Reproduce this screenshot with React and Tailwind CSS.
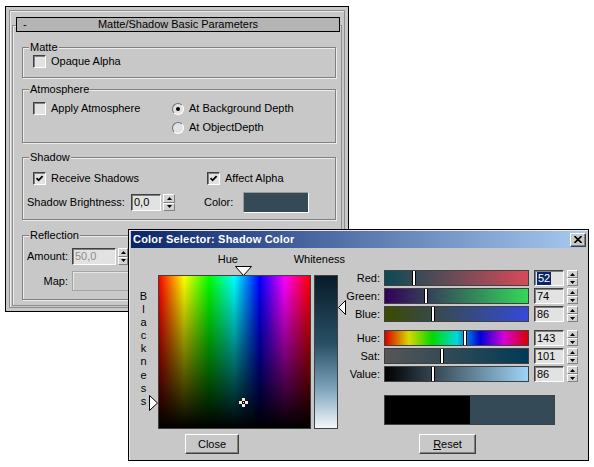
import React from "react";

const FONT = "font-['Liberation_Sans',Arial,sans-serif]";
const RAISED =
  "border border-t-white border-l-white border-b-[#404040] border-r-[#404040] bg-[#c8c8c8] shadow-[inset_-1px_-1px_0_#808080]";
const SUNKEN =
  "border border-t-[#404040] border-l-[#404040] border-b-white border-r-white bg-[#e2e2e2] shadow-[inset_1px_1px_0_#808080]";

const CheckBox = ({ checked }) => (
  <span className={`flex h-[13px] w-[13px] shrink-0 items-center justify-center ${SUNKEN}`}>
    {checked && (
      <svg width="9" height="9" viewBox="0 0 9 9">
        <path d="M1.5 4.2 L3.6 6.3 L7.6 2.2" fill="none" stroke="#000" strokeWidth="1.8" />
      </svg>
    )}
  </span>
);

const Radio = ({ on }) => (
  <span className="flex h-[12px] w-[12px] shrink-0 items-center justify-center rounded-full border border-t-[#707070] border-l-[#707070] border-b-white border-r-white bg-[#e2e2e2]">
    {on && <span className="h-[4px] w-[4px] rounded-full bg-black" />}
  </span>
);

const Spin = ({ className }) => (
  <div className={`flex shrink-0 flex-col ${className}`}>
    {["M2.5 0L5 3H0Z", "M0 0H5L2.5 3Z"].map((d) => (
      <div key={d} className="flex flex-1 items-center justify-center border border-t-white border-l-white border-b-[#808080] border-r-[#808080] bg-[#d2d2d2]">
        <svg width="5" height="3" viewBox="0 0 5 3">
          <path d={d} fill="#000" />
        </svg>
      </div>
    ))}
  </div>
);

const Field = ({ className, children }) => (
  <div className={`flex shrink-0 items-center pl-[2px] ${SUNKEN} ${className}`}>{children}</div>
);

const Group = ({ label, className, children }) => (
  <div className={`ml-[9px] w-[314px] border border-[#808080] shadow-[1px_1px_0_#ececec,inset_1px_1px_0_#ececec] ${className}`}>
    <div className="-mt-[7px] ml-[6px] h-[13px] w-fit bg-[#c8c8c8] px-[1px]">{label}</div>
    {children}
  </div>
);

const Bar = ({ value, bg }) => {
  const left = Math.round((value / 255) * 143) - 2;
  return (
    <div className={`relative ml-[4px] h-[16px] w-[145px] shrink-0 border border-[#404040] ${bg}`}>
      <div className="absolute bottom-0 top-0 w-[4px] border-x border-black bg-white" style={{ left }} />
    </div>
  );
};

const ColorRow = ({ label, value, bg, selected, className = "" }) => (
  <div className={`flex h-[16px] items-center ${className}`}>
    <span className="w-[35px] shrink-0 text-right">{label}</span>
    <Bar value={value} bg={bg} />
    <Field className="ml-[5px] h-[16px] w-[30px]">
      {selected ? <span className="bg-[#0a246a] px-[1px] text-white">{value}</span> : value}
    </Field>
    <Spin className="ml-[3px] h-[16px] w-[11px]" />
  </div>
);

const rgbRows = [
  { label: "Red:", value: 52, bg: "bg-[linear-gradient(to_right,#0a4a56,#d84a58)]", selected: true },
  { label: "Green:", value: 74, bg: "bg-[linear-gradient(to_right,#34005a,#34d85a)]", className: "mt-[2px]" },
  { label: "Blue:", value: 86, bg: "bg-[linear-gradient(to_right,#3a4a00,#344ad8)]", className: "mt-[2px]" },
];

const hsvRows = [
  {
    label: "Hue:",
    value: 143,
    bg: "bg-[linear-gradient(to_right,#d80000,#d8d800,#00d800,#00d8d8,#0000d8,#d800d8,#d80000)]",
    className: "mt-[8px]",
  },
  { label: "Sat:", value: 101, bg: "bg-[linear-gradient(to_right,#565656,#003a58)]", className: "mt-[2px]" },
  { label: "Value:", value: 86, bg: "bg-[linear-gradient(to_right,#000000,#9ed4f8)]", className: "mt-[2px]" },
];

const MatteShadowPanel = () => (
  <div className="absolute left-[5px] top-[6px] h-[306px] w-[344px] border border-black bg-[#c8c8c8]">
    <div className="m-[3px] h-[298px] border border-[#8c8c8c] shadow-[inset_1px_1px_0_#ececec]">
      <div className="ml-[2px] mt-[14px] h-[281px] w-[330px] border border-[#8c8c8c] shadow-[inset_1px_1px_0_#ececec]">
        <div className="-mt-[9px] ml-[3px] grid h-[15px] w-[324px] grid-cols-[16px_1fr_16px] items-center border border-black bg-[#b4b4b4] leading-[13px]">
          <span className="pl-[6px]">-</span>
          <span className="text-center">Matte/Shadow Basic Parameters</span>
          <span />
        </div>

        <Group label="Matte" className="mt-[15px] h-[31px]">
          <div className="mt-[1px] flex h-[13px] items-center pl-[10px]">
            <CheckBox />
            <span className="ml-[5px]">Opaque Alpha</span>
          </div>
        </Group>

        <Group label="Atmosphere" className="mt-[11px] h-[54px]">
          <div className="mt-[6px] flex pl-[10px]">
            <div className="flex h-[13px] w-[139px] items-center">
              <CheckBox />
              <span className="ml-[5px]">Apply Atmosphere</span>
            </div>
            <div className="flex flex-col gap-[6px]">
              <div className="flex h-[13px] items-center">
                <Radio on />
                <span className="ml-[5px]">At Background Depth</span>
              </div>
              <div className="flex h-[13px] items-center">
                <Radio />
                <span className="ml-[5px]">At ObjectDepth</span>
              </div>
            </div>
          </div>
        </Group>

        <Group label="Shadow" className="mt-[14px] h-[63px]">
          <div className="mt-[8px] flex h-[13px] items-center pl-[10px]">
            <div className="flex w-[174px] items-center">
              <CheckBox checked />
              <span className="ml-[5px]">Receive Shadows</span>
            </div>
            <CheckBox checked />
            <span className="ml-[5px]">Affect Alpha</span>
          </div>
          <div className="mt-[7px] flex h-[21px] items-center pl-[4px]">
            <span className="w-[104px] shrink-0">Shadow Brightness:</span>
            <Field className="h-[17px] w-[30px]">0,0</Field>
            <Spin className="ml-[2px] h-[17px] w-[12px]" />
            <span className="ml-[29px] w-[39px] shrink-0">Color:</span>
            <div className="h-[21px] w-[66px] border border-t-[#9a9a9a] border-l-[#9a9a9a] border-b-white border-r-white bg-[#344a56]" />
          </div>
        </Group>

        <Group label="Reflection" className="mt-[15px] h-[65px]">
          <div className="mt-[6px] flex h-[17px] items-center">
            <span className="w-[49px] shrink-0 pr-[4px] text-right">Amount:</span>
            <Field className="h-[17px] w-[44px] text-[#8c8c8c]">50,0</Field>
            <Spin className="ml-[2px] h-[17px] w-[10px]" />
          </div>
          <div className="mt-[6px] flex h-[20px] items-center">
            <span className="w-[49px] shrink-0 pr-[4px] text-right">Map:</span>
            <div className="h-[20px] w-[236px] border border-[#a4a4a4] bg-[#c8c8c8] shadow-[inset_1px_1px_0_#e6e6e6]" />
          </div>
        </Group>
      </div>
    </div>
  </div>
);

const ColorSelector = () => (
  <div className="absolute left-[128px] top-[229px] h-[232px] w-[461px] border border-black bg-[#c8c8c8] shadow-[inset_1px_1px_0_#e8e8e8]">
    <div className="mx-[2px] mt-[1px] flex h-[17px] items-center bg-[linear-gradient(to_right,#0a246a,#a6caf0)] pl-[2px]">
      <span className="font-bold tracking-[0.2px] text-white">Color Selector: Shadow Color</span>
      <div className={`ml-auto flex h-[14px] w-[16px] items-center justify-center ${RAISED}`}>
        <svg width="8" height="7" viewBox="0 0 8 7">
          <path d="M0.5 0 L7.5 7 M7.5 0 L0.5 7" stroke="#000" strokeWidth="1.6" />
        </svg>
      </div>
    </div>

    <div className="flex">
      <div className="relative w-[216px] shrink-0">
        <div className="flex h-[27px] pt-[5px]">
          <span className="ml-[82px] h-[13px] w-[40px] text-center">Hue</span>
          <span className="ml-[49px] h-[13px]">Whiteness</span>
        </div>
        <svg className="absolute left-[106px] top-[18px]" width="17" height="10" viewBox="0 0 17 10">
          <path d="M0.5 0.5 H16.5 L8.5 9.5 Z" fill="#fff" stroke="#000" />
        </svg>

        <div className="relative flex">
          <div className="w-[29px] shrink-0 pt-[15px] text-center leading-[13.1px]">
            {"Blackness".split("").map((c, i) => (
              <div key={i}>{c}</div>
            ))}
          </div>
          <div className="relative h-[154px] w-[153px] shrink-0 border border-[#404040] bg-[linear-gradient(to_bottom,transparent,#000),linear-gradient(to_right,#f00,#ff0,#0f0,#0ff,#00f,#f0f,#f00)]">
            <svg className="absolute left-[80px] top-[122px]" width="9" height="9" viewBox="0 0 9 9">
              <path d="M3 0H6V3H9V6H6V9H3V6H0V3H3Z" fill="#ffe4dc" />
              <path d="M3 3H6V6H3Z" fill="#000" />
              <path d="M4 4H5V5H4Z" fill="#ffe4dc" />
            </svg>
          </div>
          <div className="ml-[3px] h-[154px] w-[24px] shrink-0 border border-[#404040] bg-[linear-gradient(to_bottom,#071a28,#2a5066_45%,#80a6be_75%,#f4f8fb)]" />
          <svg className="absolute left-[20px] top-[120px]" width="9" height="16" viewBox="0 0 9 16">
            <path d="M0.5 0.5 L8.5 8 L0.5 15.5 Z" fill="#fff" stroke="#000" />
          </svg>
          <svg className="absolute left-[209px] top-[25px]" width="8" height="15" viewBox="0 0 8 15">
            <path d="M7.5 0.5 L0.5 7.5 L7.5 14.5 Z" fill="#fff" stroke="#000" />
          </svg>
        </div>

        <div className={`ml-[56px] mt-[5px] flex h-[20px] w-[54px] items-center justify-center ${RAISED}`}>Close</div>
      </div>

      <div className="pt-[22px]">
        {rgbRows.map((r) => (
          <ColorRow key={r.label} {...r} />
        ))}
        {hsvRows.map((r) => (
          <ColorRow key={r.label} {...r} />
        ))}
        <div className="ml-[39px] mt-[13px] flex h-[30px] w-[171px] border border-[#404040]">
          <div className="w-[85px] bg-black" />
          <div className="flex-1 bg-[#344a56]" />
        </div>
        <div className={`ml-[74px] mt-[9px] flex h-[20px] w-[57px] items-center justify-center ${RAISED}`}>
          <span>
            <span className="underline">R</span>eset
          </span>
        </div>
      </div>
    </div>
  </div>
);

export default function App() {
  return (
    <div className={`relative h-[467px] w-[594px] overflow-hidden bg-white text-[11px] leading-[13px] text-black ${FONT}`}>
      <MatteShadowPanel />
      <ColorSelector />
    </div>
  );
}
